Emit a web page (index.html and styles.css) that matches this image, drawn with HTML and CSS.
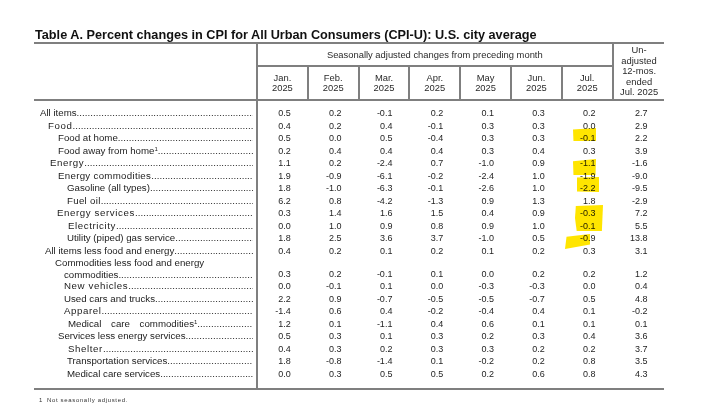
FILE: index.html
```html
<!DOCTYPE html>
<html lang="en">
<head>
<meta charset="utf-8">
<title>Table A. Percent changes in CPI</title>
<link rel="stylesheet" href="styles.css">
</head>
<body>
<div class="page">
  <h1 class="title">Table A. Percent changes in CPI for All Urban Consumers (CPI-U): U.S. city average</h1>
  <div class="tablewrap">
    <div class="cols thead">
      <div class="h-label"></div>
      <div class="h-season">Seasonally adjusted changes from preceding month</div>
      <div class="h-unadj">Un-<br>adjusted<br>12-mos.<br>ended<br>Jul. 2025</div>
      <div class="h-month">Jan.<br>2025</div>
      <div class="h-month">Feb.<br>2025</div>
      <div class="h-month">Mar.<br>2025</div>
      <div class="h-month">Apr.<br>2025</div>
      <div class="h-month">May<br>2025</div>
      <div class="h-month">Jun.<br>2025</div>
      <div class="h-month">Jul.<br>2025</div>
    </div>
    <div class="tbody">
      <div class="cols row"><div class="lab ind-6"><span>All items</span><span class="dots"></span></div><span class="n">0.5</span><span class="n">0.2</span><span class="n">-0.1</span><span class="n">0.2</span><span class="n">0.1</span><span class="n">0.3</span><span class="n">0.2</span><span class="n last">2.7</span></div>
      <div class="cols row"><div class="lab ind-14"><span class="sp">Food</span><span class="dots"></span></div><span class="n">0.4</span><span class="n">0.2</span><span class="n">0.4</span><span class="n">-0.1</span><span class="n">0.3</span><span class="n">0.3</span><span class="n">0.0</span><span class="n last">2.9</span></div>
      <div class="cols row"><div class="lab ind-24"><span>Food at home</span><span class="dots"></span></div><span class="n">0.5</span><span class="n">0.0</span><span class="n">0.5</span><span class="n">-0.4</span><span class="n">0.3</span><span class="n">0.3</span><span class="n">-0.1</span><span class="n last">2.2</span></div>
      <div class="cols row"><div class="lab ind-24"><span>Food away from home<sup>1</sup></span><span class="dots"></span></div><span class="n">0.2</span><span class="n">0.4</span><span class="n">0.4</span><span class="n">0.4</span><span class="n">0.3</span><span class="n">0.4</span><span class="n">0.3</span><span class="n last">3.9</span></div>
      <div class="cols row"><div class="lab ind-16"><span class="sp">Energy</span><span class="dots"></span></div><span class="n">1.1</span><span class="n">0.2</span><span class="n">-2.4</span><span class="n">0.7</span><span class="n">-1.0</span><span class="n">0.9</span><span class="n">-1.1</span><span class="n last">-1.6</span></div>
      <div class="cols row"><div class="lab ind-24"><span class="sp-s">Energy commodities</span><span class="dots"></span></div><span class="n">1.9</span><span class="n">-0.9</span><span class="n">-6.1</span><span class="n">-0.2</span><span class="n">-2.4</span><span class="n">1.0</span><span class="n">-1.9</span><span class="n last">-9.0</span></div>
      <div class="cols row"><div class="lab ind-33"><span>Gasoline (all types)</span><span class="dots"></span></div><span class="n">1.8</span><span class="n">-1.0</span><span class="n">-6.3</span><span class="n">-0.1</span><span class="n">-2.6</span><span class="n">1.0</span><span class="n">-2.2</span><span class="n last">-9.5</span></div>
      <div class="cols row"><div class="lab ind-33"><span class="sp-s">Fuel oil</span><span class="dots"></span></div><span class="n">6.2</span><span class="n">0.8</span><span class="n">-4.2</span><span class="n">-1.3</span><span class="n">0.9</span><span class="n">1.3</span><span class="n">1.8</span><span class="n last">-2.9</span></div>
      <div class="cols row"><div class="lab ind-23"><span class="sp">Energy services</span><span class="dots"></span></div><span class="n">0.3</span><span class="n">1.4</span><span class="n">1.6</span><span class="n">1.5</span><span class="n">0.4</span><span class="n">0.9</span><span class="n">-0.3</span><span class="n last">7.2</span></div>
      <div class="cols row"><div class="lab ind-34"><span class="sp">Electricity</span><span class="dots"></span></div><span class="n">0.0</span><span class="n">1.0</span><span class="n">0.9</span><span class="n">0.8</span><span class="n">0.9</span><span class="n">1.0</span><span class="n">-0.1</span><span class="n last">5.5</span></div>
      <div class="cols row"><div class="lab ind-33"><span>Utility (piped) gas service</span><span class="dots"></span></div><span class="n">1.8</span><span class="n">2.5</span><span class="n">3.6</span><span class="n">3.7</span><span class="n">-1.0</span><span class="n">0.5</span><span class="n">-0.9</span><span class="n last">13.8</span></div>
      <div class="cols row"><div class="lab ind-11"><span>All items less food and energy</span><span class="dots"></span></div><span class="n">0.4</span><span class="n">0.2</span><span class="n">0.1</span><span class="n">0.2</span><span class="n">0.1</span><span class="n">0.2</span><span class="n">0.3</span><span class="n last">3.1</span></div>
      <div class="cols row two"><div class="lab-two"><div class="ind-21 line1">Commodities less food and energy</div><div class="lab ind-30"><span>commodities</span><span class="dots"></span></div></div><span class="n">0.3</span><span class="n">0.2</span><span class="n">-0.1</span><span class="n">0.1</span><span class="n">0.0</span><span class="n">0.2</span><span class="n">0.2</span><span class="n last">1.2</span></div>
      <div class="cols row"><div class="lab ind-30"><span class="sp">New vehicles</span><span class="dots"></span></div><span class="n">0.0</span><span class="n">-0.1</span><span class="n">0.1</span><span class="n">0.0</span><span class="n">-0.3</span><span class="n">-0.3</span><span class="n">0.0</span><span class="n last">0.4</span></div>
      <div class="cols row"><div class="lab ind-30"><span>Used cars and trucks</span><span class="dots"></span></div><span class="n">2.2</span><span class="n">0.9</span><span class="n">-0.7</span><span class="n">-0.5</span><span class="n">-0.5</span><span class="n">-0.7</span><span class="n">0.5</span><span class="n last">4.8</span></div>
      <div class="cols row"><div class="lab ind-30"><span class="sp">Apparel</span><span class="dots"></span></div><span class="n">-1.4</span><span class="n">0.6</span><span class="n">0.4</span><span class="n">-0.2</span><span class="n">-0.4</span><span class="n">0.4</span><span class="n">0.1</span><span class="n last">-0.2</span></div>
      <div class="cols row"><div class="lab ind-34"><span class="ws">Medical care commodities<sup>1</sup></span><span class="dots"></span></div><span class="n">1.2</span><span class="n">0.1</span><span class="n">-1.1</span><span class="n">0.4</span><span class="n">0.6</span><span class="n">0.1</span><span class="n">0.1</span><span class="n last">0.1</span></div>
      <div class="cols row"><div class="lab ind-24"><span>Services less energy services</span><span class="dots"></span></div><span class="n">0.5</span><span class="n">0.3</span><span class="n">0.1</span><span class="n">0.3</span><span class="n">0.2</span><span class="n">0.3</span><span class="n">0.4</span><span class="n last">3.6</span></div>
      <div class="cols row"><div class="lab ind-34"><span class="sp">Shelter</span><span class="dots"></span></div><span class="n">0.4</span><span class="n">0.3</span><span class="n">0.2</span><span class="n">0.3</span><span class="n">0.3</span><span class="n">0.2</span><span class="n">0.2</span><span class="n last">3.7</span></div>
      <div class="cols row"><div class="lab ind-33"><span>Transportation services</span><span class="dots"></span></div><span class="n">1.8</span><span class="n">-0.8</span><span class="n">-1.4</span><span class="n">0.1</span><span class="n">-0.2</span><span class="n">0.2</span><span class="n">0.8</span><span class="n last">3.5</span></div>
      <div class="cols row"><div class="lab ind-33"><span>Medical care services</span><span class="dots"></span></div><span class="n">0.0</span><span class="n">0.3</span><span class="n">0.5</span><span class="n">0.5</span><span class="n">0.2</span><span class="n">0.6</span><span class="n">0.8</span><span class="n last">4.3</span></div>
    </div>
    <div class="hl hl1"></div>
    <div class="hl hl2"></div>
    <div class="hl hl3"></div>
    <div class="hl hl4"></div>
    <div class="hl hl5"></div>
  </div>
  <p class="foot"><span class="fn">1</span>Not seasonally adjusted.</p>
</div>
</body>
</html>
```
FILE: styles.css
```css
* { box-sizing: border-box; margin: 0; padding: 0; }
html, body { background: #fff; }
body {
  font-family: "Liberation Sans", Arial, sans-serif;
  color: #1e1e1e;
}
.page {
  width: 702px;
  height: 415px;
  overflow: hidden;
  padding: 29px 0 0 34px;
}
.title {
  font-size: 12.7px;
  font-weight: bold;
  line-height: 13px;
  padding-left: 1px;
  color: #111;
  white-space: nowrap;
}
.tablewrap {
  position: relative;
  width: 630px;
}
.cols {
  display: grid;
  grid-template-columns: 224px repeat(7, 50.8px) 50px;
}
.thead {
  grid-template-rows: 23px 32px;
  border-top: 2px solid #7f7f7f;
  border-bottom: 2px solid #7f7f7f;
  font-size: 9.4px;
  color: #2a2a2a;
}
.h-label {
  grid-column: 1;
  grid-row: 1 / 3;
  border-right: 2px solid #7f7f7f;
}
.h-season {
  grid-column: 2 / 9;
  grid-row: 1;
  border-right: 2px solid #7f7f7f;
  border-bottom: 2px solid #7f7f7f;
  text-align: center;
  line-height: 21px;
}
.h-unadj {
  grid-column: 9;
  grid-row: 1 / 3;
  display: flex;
  align-items: center;
  justify-content: center;
  text-align: center;
  line-height: 10.5px;
  padding-left: 1px;
}
.h-month {
  grid-row: 2;
  border-right: 2px solid #7f7f7f;
  display: flex;
  align-items: center;
  justify-content: center;
  text-align: center;
  line-height: 10px;
}
.tbody {
  padding: 6px 0 8px;
  border-bottom: 2px solid #7f7f7f;
  background: linear-gradient(to right, transparent 222px, #7f7f7f 222px, #7f7f7f 224px, transparent 224px);
}
.row {
  height: 12.5px;
  line-height: 12.5px;
}
.row.two {
  height: 23px;
  line-height: 11.5px;
}
.lab {
  display: flex;
  white-space: nowrap;
  overflow: hidden;
  font-size: 9.7px;
  padding-right: 5px;
  color: #222;
}
.lab-two {
  display: flex;
  flex-direction: column;
  font-size: 9.7px;
  color: #222;
  white-space: nowrap;
}
.lab-two .lab { font-size: 9.7px; }
.dots {
  flex: 1;
  overflow: hidden;
  min-width: 0;
}
.dots::after {
  content: "........................................................................................................................";
  letter-spacing: 0.05px;
}
.lab sup {
  font-size: 6px;
  vertical-align: 3px;
  line-height: 0;
}
.sp { letter-spacing: 0.6px; }
.sp-s { letter-spacing: 0.3px; }
.ws { word-spacing: 7px; }
.ind-6 { padding-left: 6px; }
.ind-11 { padding-left: 11px; }
.ind-14 { padding-left: 14px; }
.ind-16 { padding-left: 16px; }
.ind-21 { padding-left: 21px; }
.ind-23 { padding-left: 23px; }
.ind-24 { padding-left: 24px; }
.ind-30 { padding-left: 30px; }
.ind-33 { padding-left: 33px; }
.ind-34 { padding-left: 34px; }
.n {
  font-size: 9px;
  text-align: right;
  padding-right: 18px;
  color: #1e1e1e;
  align-self: end;
}
.n.last { padding-right: 16px; }

.hl {
  position: absolute;
  background: #ffe500;
  mix-blend-mode: multiply;
}
.hl1 { left: 539px; top: 86px; width: 23px; height: 13px; clip-path: polygon(0 12%, 100% 0, 100% 100%, 2% 100%); }
.hl2 { left: 539px; top: 117px; width: 23px; height: 16px; clip-path: polygon(0 14%, 100% 0, 98% 100%, 2% 100%); }
.hl3 { left: 543px; top: 135px; width: 22px; height: 15px; clip-path: polygon(0 4%, 100% 0, 100% 100%, 0 96%); }
.hl4 { left: 541px; top: 163px; width: 28px; height: 26px; clip-path: polygon(3% 4%, 100% 0, 96% 100%, 6% 100%, 0 50%); }
.hl5 { left: 531px; top: 192px; width: 25px; height: 15px; clip-path: polygon(6% 18%, 100% 0, 100% 70%, 0 100%); }

.foot {
  margin-top: 6px;
  font-size: 6px;
  line-height: 8px;
  letter-spacing: 0.65px;
  padding-left: 5px;
  color: #333;
}
.fn { margin-right: 4px; }
```
